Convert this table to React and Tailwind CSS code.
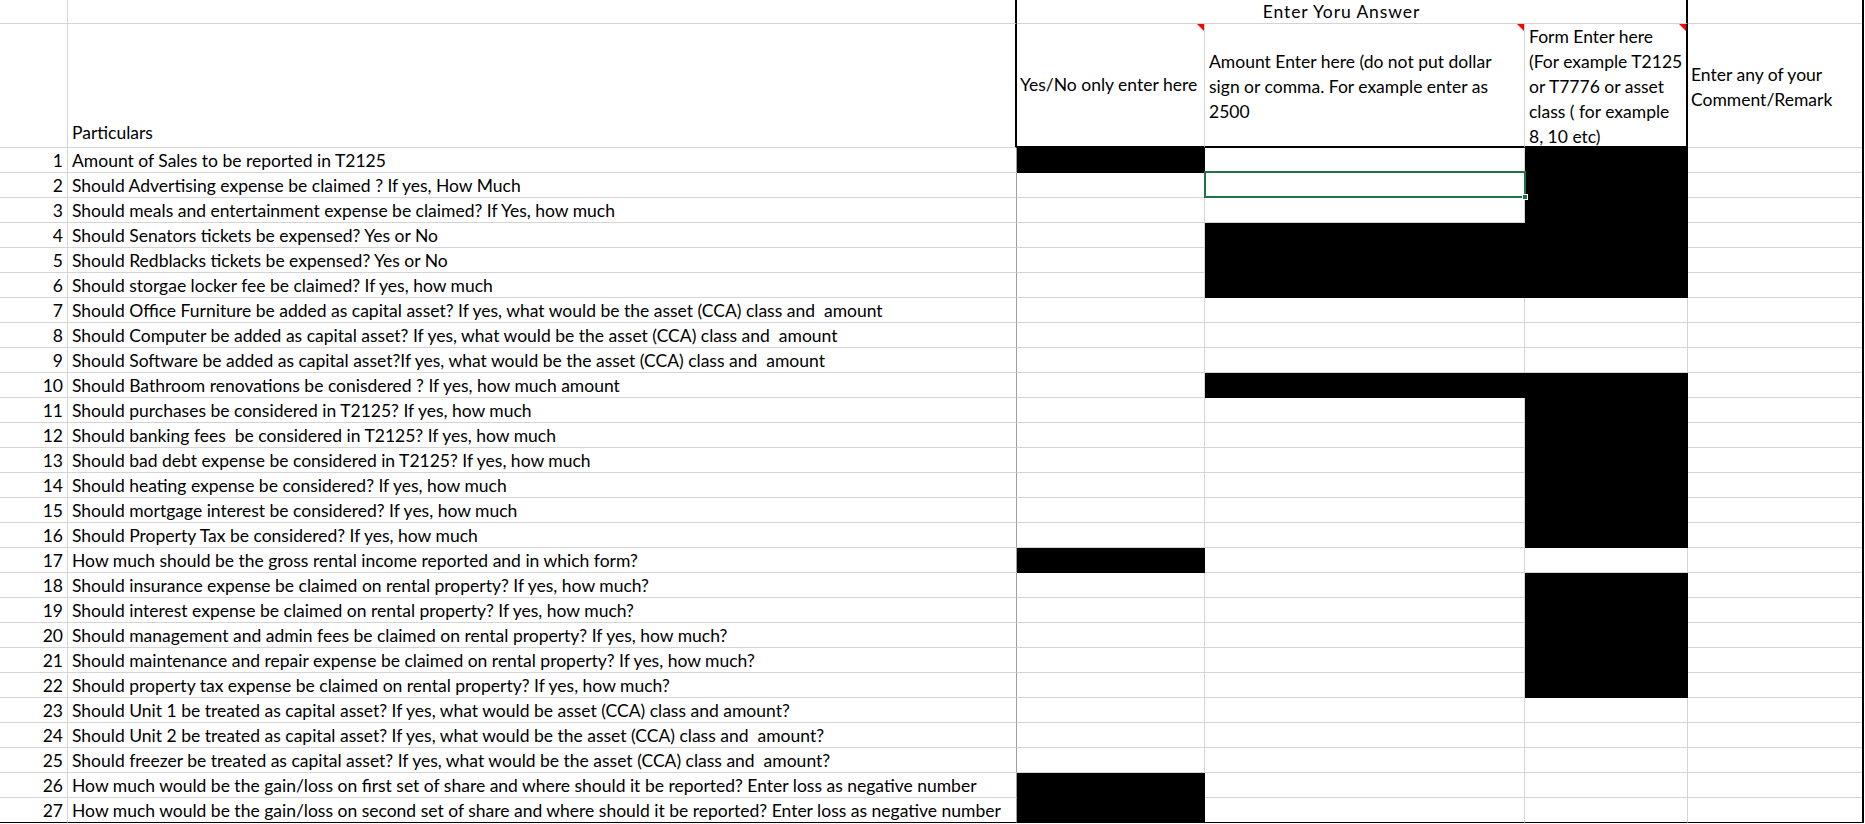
const QUESTIONS = [
  'Amount of Sales to be reported in T2125',
  'Should Advertising expense be claimed ? If yes, How Much',
  'Should meals and entertainment expense be claimed? If Yes, how much',
  'Should Senators tickets be expensed? Yes or No',
  'Should Redblacks tickets be expensed? Yes or No',
  'Should storgae locker fee be claimed? If yes, how much',
  'Should Office Furniture be added as capital asset? If yes, what would be the asset (CCA) class and  amount',
  'Should Computer be added as capital asset? If yes, what would be the asset (CCA) class and  amount',
  'Should Software be added as capital asset?If yes, what would be the asset (CCA) class and  amount',
  'Should Bathroom renovations be conisdered ? If yes, how much amount',
  'Should purchases be considered in T2125? If yes, how much',
  'Should banking fees  be considered in T2125? If yes, how much',
  'Should bad debt expense be considered in T2125? If yes, how much',
  'Should heating expense be considered? If yes, how much',
  'Should mortgage interest be considered? If yes, how much',
  'Should Property Tax be considered? If yes, how much',
  'How much should be the gross rental income reported and in which form?',
  'Should insurance expense be claimed on rental property? If yes, how much?',
  'Should interest expense be claimed on rental property? If yes, how much?',
  'Should management and admin fees be claimed on rental property? If yes, how much?',
  'Should maintenance and repair expense be claimed on rental property? If yes, how much?',
  'Should property tax expense be claimed on rental property? If yes, how much?',
  'Should Unit 1 be treated as capital asset? If yes, what would be asset (CCA) class and amount?',
  'Should Unit 2 be treated as capital asset? If yes, what would be the asset (CCA) class and  amount?',
  'Should freezer be treated as capital asset? If yes, what would be the asset (CCA) class and  amount?',
  'How much would be the gain/loss on first set of share and where should it be reported? Enter loss as negative number',
  'How much would be the gain/loss on second set of share and where should it be reported? Enter loss as negative number',
]

// redacted (black filled) cells per row number
const BLACK_C = [1, 17, 26, 27]
const BLACK_D = [4, 5, 6, 10]
const BLACK_E = [1, 2, 3, 4, 5, 6, 10, 11, 12, 13, 14, 15, 16, 18, 19, 20, 21, 22]

const cell = 'border-r border-b border-[#d4d4d4]'

function Flag() {
  return (
    <div className="absolute top-0 right-0 w-[7px] h-[7px] bg-[#ff0000] [clip-path:polygon(0_0,100%_0,100%_100%)]" />
  )
}

function Lines({ lines }) {
  return (
    <div className="flex flex-col leading-[25px] whitespace-nowrap">
      {lines.map((l) => (
        <span key={l}>{l}</span>
      ))}
    </div>
  )
}

export default function App() {
  return (
    <div className="w-[1865px] h-[824px] bg-white overflow-hidden text-black text-[17.5px] font-['Lato',sans-serif]">
      <div className="grid grid-cols-[68px_949px_188px_320px_163px_174px] grid-rows-[24px_124px] border-r-2 border-black w-[1864px]">
        {/* header row 1 */}
        <div className={cell} />
        <div className="border-b border-[#d4d4d4] border-r-2 border-r-black" />
        <div className="col-span-3 border-b border-[#d4d4d4] border-r-2 border-r-black flex items-center justify-center leading-none pt-[1px] pr-[20px] tracking-[0.9px]">
          Enter Yoru Answer
        </div>
        <div className="border-b border-[#d4d4d4]" />

        {/* header row 2 */}
        <div className={cell} />
        <div className="border-b border-[#d4d4d4] border-r-2 border-r-black flex items-end px-[4px] pb-[2px] leading-[25px]">
          Particulars
        </div>
        <div className="relative border-r border-[#d4d4d4] border-b-2 border-b-black flex items-center pl-[3px] whitespace-nowrap overflow-hidden">
          Yes/No only enter here
          <Flag />
        </div>
        <div className="relative border-r border-[#d4d4d4] border-b-2 border-b-black flex items-center pl-[4px] pt-[2px]">
          <Lines lines={['Amount Enter here (do not put dollar', 'sign or comma. For example enter as', '2500']} />
          <Flag />
        </div>
        <div className="relative border-r-2 border-black border-b-2 flex items-center pl-[4px] pt-[2px] overflow-hidden">
          <Lines lines={['Form Enter here', '(For example T2125', 'or T7776 or asset', 'class ( for example', '8, 10 etc)']} />
          <Flag />
        </div>
        <div className="border-b border-[#d4d4d4] flex items-center pl-[3px] pt-[2px]">
          <Lines lines={['Enter any of your', 'Comment/Remark']} />
        </div>

        {/* data rows */}
        {QUESTIONS.map((q, i) => {
          const n = i + 1
          const last = n === QUESTIONS.length
          const bottom = last ? 'border-b-black' : ''
          return [
            <div key={`a${n}`} className={`${cell} ${bottom} h-[25px] flex items-center justify-end pr-[4px] pt-[1px] leading-none`}>
              {n}
            </div>,
            <div key={`b${n}`} className={`border-b border-[#d4d4d4] border-r border-r-[#9f9f9f] ${bottom} h-[25px] flex items-center px-[4px] pt-[1px] leading-none whitespace-pre overflow-hidden`}>
              {q}
            </div>,
            <div key={`c${n}`} className={`${cell} ${bottom} h-[25px] ${BLACK_C.includes(n) ? 'bg-black border-black' : ''}`} />,
            <div key={`d${n}`} className={`relative ${cell} ${bottom} h-[25px] ${BLACK_D.includes(n) ? 'bg-black border-black' : ''}`}>
              {n === 2 && (
                <div className="absolute -left-[1px] -top-[2px] w-[322px] h-[27px] border-2 border-[#217346] z-10">
                  <div className="absolute -right-[4px] -bottom-[4px] w-[6px] h-[6px] bg-[#217346] border border-white" />
                </div>
              )}
            </div>,
            <div key={`e${n}`} className={`${cell} ${bottom} h-[25px] ${BLACK_E.includes(n) ? 'bg-black border-black' : ''}`} />,
            <div key={`f${n}`} className={`border-b border-[#d4d4d4] ${bottom} h-[25px]`} />,
          ]
        })}
      </div>
    </div>
  )
}
